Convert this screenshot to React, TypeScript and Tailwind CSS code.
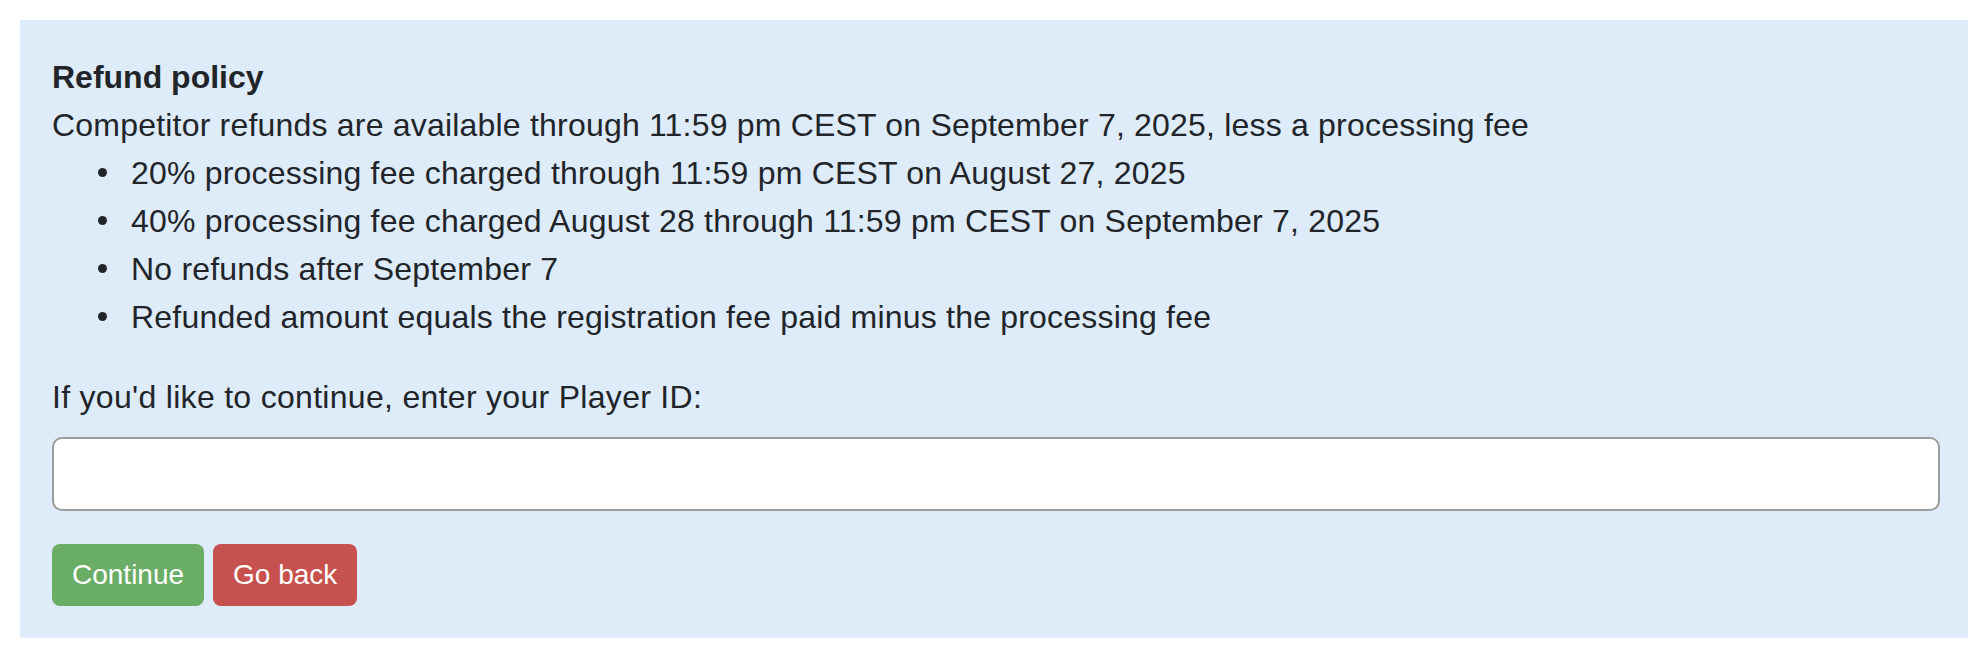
import { useState } from "react";

const BULLETS = [
  "20% processing fee charged through 11:59 pm CEST on August 27, 2025",
  "40% processing fee charged August 28 through 11:59 pm CEST on September 7, 2025",
  "No refunds after September 7",
  "Refunded amount equals the registration fee paid minus the processing fee",
];

export default function App() {
  const [playerId, setPlayerId] = useState("");

  return (
    <div className="min-h-screen bg-white p-5 font-['Liberation_Sans',Arial,sans-serif] text-[#212529]">
      <div className="bg-[#deebf8] pt-[33px] pb-8 pl-8 pr-[28px] text-[32px] leading-[48px] tracking-[0.2px]">
        <div className="font-bold tracking-normal">Refund policy</div>
        <div>Competitor refunds are available through 11:59 pm CEST on September 7, 2025, less a processing fee</div>
        <ul className="mb-8">
          {BULLETS.map((item) => (
            <li key={item} className="flex items-start pl-[46px]">
              <span className="mt-[19px] h-[9px] w-[9px] shrink-0 rounded-full bg-[#212529]" />
              <span className="ml-[24px]">{item}</span>
            </li>
          ))}
        </ul>

        <label htmlFor="player-id" className="block tracking-[0.3px]">
          If you'd like to continue, enter your Player ID:
        </label>
        <input
          id="player-id"
          value={playerId}
          onChange={(e) => setPlayerId(e.target.value)}
          className="mt-4 block h-[74px] w-full rounded-[10px] border-2 border-[#9c9c9c] bg-white px-4 text-[32px] outline-none"
        />

        <div className="mt-[33px] flex gap-[9px] tracking-normal">
          <button className="h-[62px] rounded-[8px] bg-[#6aad66] px-5 text-[28px] text-white">
            Continue
          </button>
          <button className="h-[62px] rounded-[8px] bg-[#c7514e] px-5 text-[28px] text-white">
            Go back
          </button>
        </div>
      </div>
    </div>
  );
}
